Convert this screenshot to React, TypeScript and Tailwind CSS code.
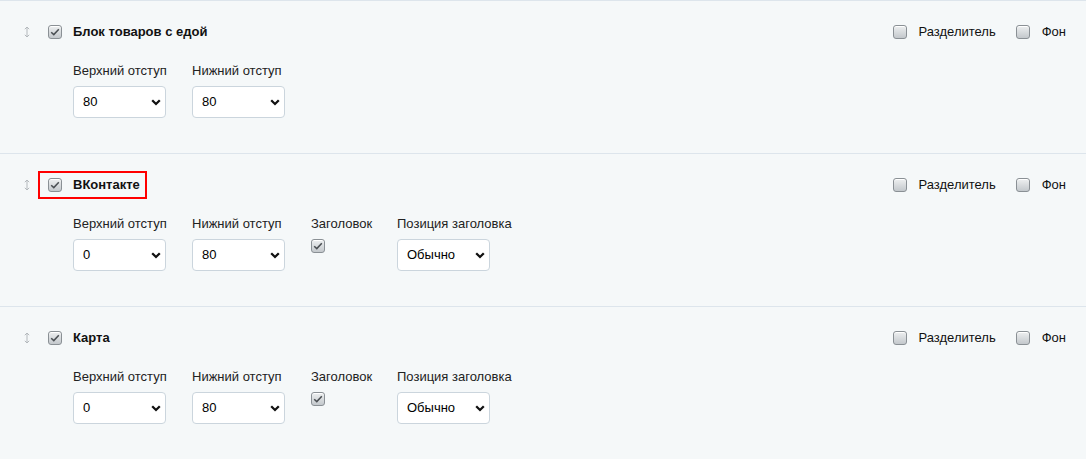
import { ReactNode } from "react";

type Field =
  | { kind: "select"; label: string; value: string; options: string[] }
  | { kind: "check"; label: string; checked: boolean };

type Block = {
  title: string;
  marked?: boolean;
  fields: Field[];
};

const paddings = ["0", "10", "20", "40", "60", "80", "100"];

const blocks: Block[] = [
  {
    title: "Блок товаров с едой",
    fields: [
      { kind: "select", label: "Верхний отступ", value: "80", options: paddings },
      { kind: "select", label: "Нижний отступ", value: "80", options: paddings },
    ],
  },
  {
    title: "ВКонтакте",
    marked: true,
    fields: [
      { kind: "select", label: "Верхний отступ", value: "0", options: paddings },
      { kind: "select", label: "Нижний отступ", value: "80", options: paddings },
      { kind: "check", label: "Заголовок", checked: true },
      { kind: "select", label: "Позиция заголовка", value: "Обычно", options: ["Обычно", "По центру"] },
    ],
  },
  {
    title: "Карта",
    fields: [
      { kind: "select", label: "Верхний отступ", value: "0", options: paddings },
      { kind: "select", label: "Нижний отступ", value: "80", options: paddings },
      { kind: "check", label: "Заголовок", checked: true },
      { kind: "select", label: "Позиция заголовка", value: "Обычно", options: ["Обычно", "По центру"] },
    ],
  },
];

function Checkbox({ checked }: { checked: boolean }) {
  return (
    <span className="flex h-[14px] w-[14px] shrink-0 items-center justify-center rounded-[3px] border border-[#8a9095] bg-gradient-to-b from-[#eef0f1] to-[#c3c8cc] shadow-[inset_0_1px_0_#fff]">
      {checked && (
        <svg width="10" height="8" viewBox="0 0 10 8" fill="none">
          <path d="M1.2 4.2 L3.8 6.6 L8.8 1.2" stroke="#4a4f53" strokeWidth="1.5" />
        </svg>
      )}
    </span>
  );
}

function DragHandle() {
  return (
    <svg width="6" height="12" viewBox="0 0 6 12" className="shrink-0">
      <path d="M3 1.5 V10.5" stroke="#b3b8bc" strokeWidth="1" />
      <path d="M0.8 3.2 L3 1 L5.2 3.2" stroke="#b3b8bc" strokeWidth="1" fill="none" />
      <path d="M0.8 8.8 L3 11 L5.2 8.8" stroke="#b3b8bc" strokeWidth="1" fill="none" />
    </svg>
  );
}

function Select({ value, options }: { value: string; options: string[] }) {
  return (
    <div className="relative h-[32px] w-[93px]">
      <select
        defaultValue={value}
        className="h-full w-full appearance-none rounded-[4px] border border-[#cbd5dd] bg-white pl-[9px] pr-6 text-[13px] text-black outline-none"
      >
        {options.map((o) => (
          <option key={o} value={o}>
            {o}
          </option>
        ))}
      </select>
      <svg
        width="10"
        height="7"
        viewBox="0 0 10 7"
        className="pointer-events-none absolute right-[5px] top-[13px]"
      >
        <path d="M1.2 1.3 L5 5 L8.8 1.3" stroke="#111" strokeWidth="2.3" fill="none" />
      </svg>
    </div>
  );
}

function Toggle({ label }: { label: string }) {
  return (
    <label className="flex items-center gap-[12px] text-[13px] text-[#111]">
      <Checkbox checked={false} />
      {label}
    </label>
  );
}

// red frame drawn around the block's checkbox and title
function Marked({ on, children }: { on?: boolean; children: ReactNode }) {
  return (
    <span className="relative flex h-[14px] items-center gap-[11px] leading-[14px]">
      {children}
      {on && (
        <span className="pointer-events-none absolute -bottom-[7px] -left-[10px] -right-[7px] -top-[7px] border-2 border-[#ff0000]" />
      )}
    </span>
  );
}

function BlockRow({ block }: { block: Block }) {
  return (
    <section className="border-t border-[#dde5ec] pb-[35px] pl-[24px] pr-[20px] pt-[22px]">
      <div className="flex h-[18px] items-center">
        <DragHandle />
        <div className="ml-[18px]">
          <Marked on={block.marked}>
            <Checkbox checked />
            <span className="text-[13px] font-bold text-[#111]">{block.title}</span>
          </Marked>
        </div>
        <div className="ml-auto flex items-center gap-[20px]">
          <Toggle label="Разделитель" />
          <Toggle label="Фон" />
        </div>
      </div>
      <div className="mt-[22px] flex gap-[26px] pl-[49px]">
        {block.fields.map((f) => (
          <div
            key={f.label}
            className={f.kind === "select" ? "flex w-[93px] flex-col" : "flex w-[60px] flex-col"}
          >
            <span className="mb-[7px] h-[16px] whitespace-nowrap text-[13px] leading-[16px] text-[#222]">
              {f.label}
            </span>
            {f.kind === "select" ? (
              <Select value={f.value} options={f.options} />
            ) : (
              <Checkbox checked={f.checked} />
            )}
          </div>
        ))}
      </div>
    </section>
  );
}

export default function App() {
  return (
    <div className="min-h-screen bg-[#f5f8f9] font-['Liberation_Sans',Arial,sans-serif]">
      {blocks.map((b) => (
        <BlockRow key={b.title} block={b} />
      ))}
    </div>
  );
}
